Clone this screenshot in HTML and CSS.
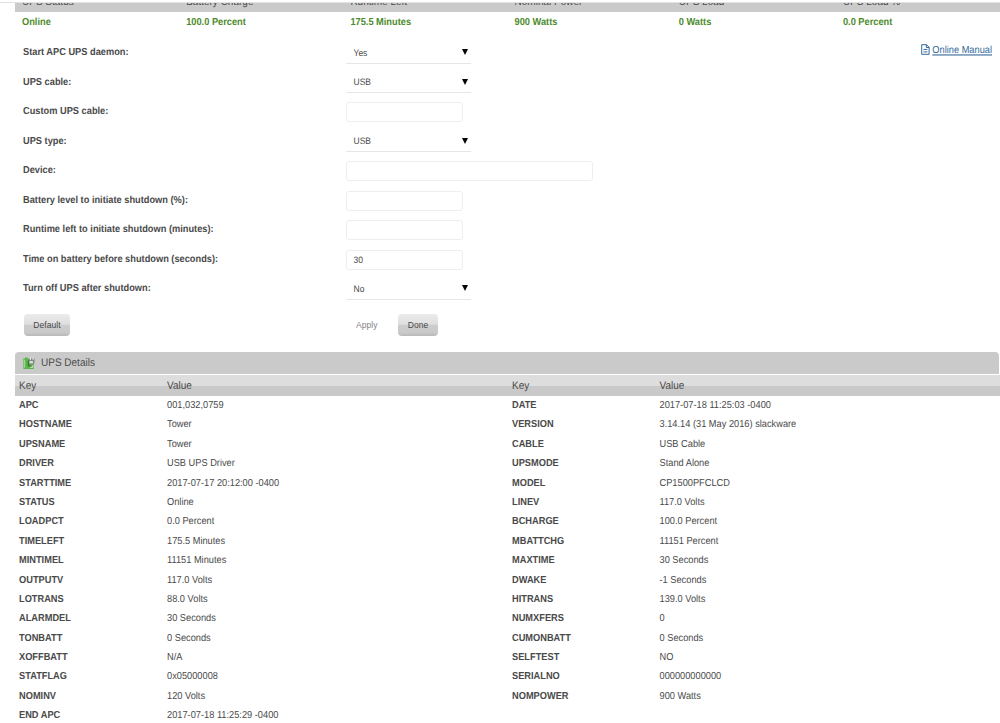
FILE: index.html
```html
<!DOCTYPE html>
<html lang="en">
<head>
<meta charset="utf-8">
<title>UPS Settings</title>
<link rel="stylesheet" href="styles.css">
</head>
<body>
<header class="topline"></header>
<main>
<section class="status">
<div class="status-head"><span>UPS Status</span><span>Battery Charge</span><span>Runtime Left</span><span>Nominal Power</span><span>UPS Load</span><span>UPS Load %</span></div>
<div class="status-values"><span>Online</span><span>100.0 Percent</span><span>175.5 Minutes</span><span>900 Watts</span><span>0 Watts</span><span>0.0 Percent</span></div>
</section>
<section class="settings">
<div class="form" id="form"></div>
<a class="manual"><svg width="9" height="11" viewBox="0 0 9 11" fill="none" stroke="currentColor"><path d="M.7.7h4.8l2.6 2.6v7H.7zM5.3.7v2.8h2.8M2.4 5.4h4M2.4 7.9h4"/></svg><span>Online Manual</span></a>
</section>
<div class="actions"><button class="btn default"><span>Default</span></button><button class="apply" disabled><span>Apply</span></button><button class="btn done"><span>Done</span></button></div>
<section class="details">
<h2><svg width="12" height="12" viewBox="0 0 12 12"><path d="M.4 1.5H2V.4h2.6v1.1H6V12H.4z" fill="#58b548"/><path d="M1.6 2.8v8" stroke="#a2d991" stroke-width="1.1"/><path d="M5 5.5h5.8V12H5z" fill="#5db04e"/><path d="M6 1.2h5.6v4.3L10.2 7.5H6z" fill="#858b85"/><path d="M7.4.5v2.2M10.1.5v2.2" stroke="#eee" stroke-width="1.2"/><path d="M6.6 4.2h3.3v2H6.6z" fill="#e4eae2"/><path d="M5.3 3.5v5.3h2.4" fill="none" stroke="#276f27"/><path d="M7.2 10.5h2.7V8" fill="none" stroke="#c4e6b8"/></svg><span>UPS Details</span></h2>
<div class="row head"><span>Key</span><span>Value</span><span>Key</span><span>Value</span></div>
<div id="rows"></div>
</section>
</main>
<script src="app.js"></script>
</body>
</html>
```
FILE: styles.css
```css
* { box-sizing: border-box; }
html, body { height: 100%; overflow: hidden; }
body { margin: 0; background: #fff; color: #4a4a4a; font: 9.25px/14px "Liberation Sans", Arial, sans-serif; text-rendering: geometricPrecision; }
span, label { display: block; transform: scaleY(1.1); }
.topline { height: 3px; border-bottom: 1px solid #e2e2e2; }
main { padding-left: 15px; }
.status-head, .status-values { display: grid; grid-template-columns: 164.2px 164.2px 164.2px 164.2px 164.2px 1fr; padding-left: 7px; }
.status-head { height: 9px; background: #cacaca; overflow: hidden; font-size: 10px; }
.status-head span { height: 13px; margin-top: -7px; line-height: 13px; }
.status-values { height: 19px; line-height: 20px; color: #4d8b2b; font-weight: bold; }
.settings { height: 272px; padding: 7px 8px 0; display: flex; justify-content: space-between; }
.field { display: grid; grid-template-columns: 322.5px 1fr; height: 29.5px; align-items: center; }
.field label { font-weight: bold; margin-top: -1px; }
.field label, .field .select, .field .input { white-space: nowrap; }
.select { width: 125px; height: 22px; display: flex; align-items: center; justify-content: space-between; padding: 1px 3px 0 8px; font-size: 8.5px; border-bottom: 1px solid #e6e6e6; }
.arrow { width: 0; height: 0; border: 3px solid transparent; border-top: 6px solid #050505; border-bottom: 0; margin-top: -1px; }
.input { width: 117px; height: 20px; border: 1px solid #eee; border-radius: 3px; padding: 0 7px; line-height: 18px; font-size: 8.5px; margin-top: 1px; }
.input.wide { width: 247px; }
.manual { display: flex; gap: 2px; height: 14px; margin-top: 5px; color: #34699a; }
.manual svg { margin-top: 1px; }
.manual span { text-decoration: underline; }
.actions { height: 49px; padding: 11px 0 0 9px; display: flex; align-items: flex-start; }
button { font: 8.5px/21px "Liberation Sans", Arial, sans-serif; letter-spacing: .05px; padding: 0; border: 0; background: none; color: #484848; height: 22px; }
.btn { border-radius: 4px; background: linear-gradient(#ebebeb 0%, #dfdfdf 47%, #cdcdcd 50%, #c9c9c9 85%, #b8b8b8 100%); }
.default { width: 46px; }
.apply { margin-left: 286px; color: #858585; width: 21px; }
.done { margin-left: 21px; width: 40px; }
h2 { margin: 0 1px 0 0; height: 22px; display: flex; align-items: center; gap: 6px; padding-left: 8px; background: #cacaca; border-radius: 4px 4px 0 0; font: 10px/22px "Liberation Sans", Arial, sans-serif; }
h2 span { padding-top: 2px; }
.row { display: grid; grid-template-columns: 148px 345px 147.5px 1fr; padding-left: 4px; height: 19.4px; line-height: 19.8px; }
.row span { height: 19.8px; }
.row span:nth-child(odd) { font-weight: bold; }
.row.head { margin-top: 1px; height: 21px; line-height: 24px; font-size: 10px; background: linear-gradient(#ddd 0 52%, #c9c9c9 52%); }
.row.head span { height: 22px; font-weight: normal; }
```
FILE: app.js
```
const fields = [
  ["Start APC UPS daemon:", "select", "Yes"], ["UPS cable:", "select", "USB"],
  ["Custom UPS cable:", "input", ""], ["UPS type:", "select", "USB"], ["Device:", "input wide", ""],
  ["Battery level to initiate shutdown (%):", "input", ""],
  ["Runtime left to initiate shutdown (minutes):", "input", ""],
  ["Time on battery before shutdown (seconds):", "input", "30"],
  ["Turn off UPS after shutdown:", "select", "No"]
];
document.getElementById("form").innerHTML = fields.map(([label, type, value]) =>
  `<div class="field"><label>${label}</label><div class="${type}"><span>${value}</span>${type === "select" ? `<i class="arrow"></i>` : ""}</div></div>`).join("");
const rows = [
  ["APC", "001,032,0759", "DATE", "2017-07-18 11:25:03 -0400"],
  ["HOSTNAME", "Tower", "VERSION", "3.14.14 (31 May 2016) slackware"],
  ["UPSNAME", "Tower", "CABLE", "USB Cable"],
  ["DRIVER", "USB UPS Driver", "UPSMODE", "Stand Alone"],
  ["STARTTIME", "2017-07-17 20:12:00 -0400", "MODEL", "CP1500PFCLCD"],
  ["STATUS", "Online", "LINEV", "117.0 Volts"],
  ["LOADPCT", "0.0 Percent", "BCHARGE", "100.0 Percent"],
  ["TIMELEFT", "175.5 Minutes", "MBATTCHG", "11151 Percent"],
  ["MINTIMEL", "11151 Minutes", "MAXTIME", "30 Seconds"],
  ["OUTPUTV", "117.0 Volts", "DWAKE", "-1 Seconds"],
  ["LOTRANS", "88.0 Volts", "HITRANS", "139.0 Volts"],
  ["ALARMDEL", "30 Seconds", "NUMXFERS", "0"],
  ["TONBATT", "0 Seconds", "CUMONBATT", "0 Seconds"],
  ["XOFFBATT", "N/A", "SELFTEST", "NO"],
  ["STATFLAG", "0x05000008", "SERIALNO", "000000000000"],
  ["NOMINV", "120 Volts", "NOMPOWER", "900 Watts"],
  ["END APC", "2017-07-18 11:25:29 -0400", "", ""]
];
document.getElementById("rows").innerHTML = rows.map(r =>
  `<div class="row">${r.map(c => `<span>${c}</span>`).join("")}</div>`).join("");
```
